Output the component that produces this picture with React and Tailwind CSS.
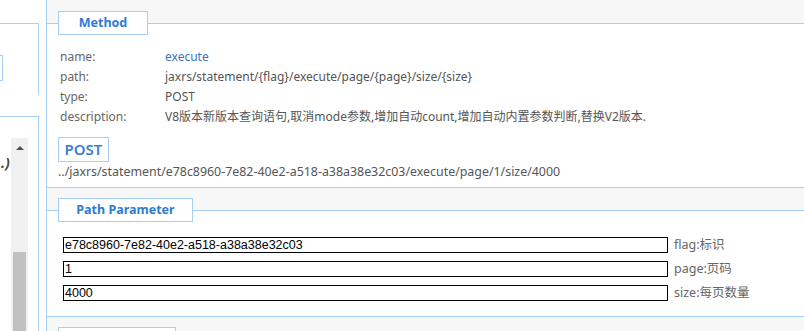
export default function App() {
  const font = { fontFamily: '"Noto Sans", "Noto Sans CJK SC", sans-serif' };
  const rows = [
    ['name:', 'execute', true],
    ['path:', 'jaxrs/statement/{flag}/execute/page/{page}/size/{size}', false],
    ['type:', 'POST', false],
    ['description:', 'V8版本新版本查询语句,取消mode参数,增加自动count,增加自动内置参数判断,替换V2版本.', false],
  ];
  const params = [
    ['e78c8960-7e82-40e2-a518-a38a38e32c03', 'flag:标识'],
    ['1', 'page:页码'],
    ['4000', 'size:每页数量'],
  ];
  return (
    <div className="w-[804px] h-[331px] overflow-hidden flex bg-white text-[12px]" style={font}>
      {/* sidebar */}
      <div className="w-[39px] shrink-0 flex flex-col overflow-hidden">
        <div className="mt-[23px] h-[72px] shrink-0 border-t border-r border-[#a6cff3] flex flex-col">
          <div className="mt-[31px] w-[3px] h-[26px] border-t border-r border-b border-[#a6cff3]" />
        </div>
        <div className="mt-[21px] flex-1 border-t border-r border-[#a6cff3] flex">
          <div className="w-[11px] shrink-0 overflow-hidden">
            <div className="mt-[36px] ml-[1px] text-[14px] font-bold italic text-[#444] leading-[20px] whitespace-nowrap">.)</div>
          </div>
          <div className="w-[17px] shrink-0 mt-[21px] bg-[#f0f0f0] flex flex-col">
            <div className="h-[20px] flex items-center justify-center">
              <div className="w-0 h-0 border-l-[4px] border-r-[4px] border-b-[4px] border-l-transparent border-r-transparent border-b-[#505050]" />
            </div>
            <div className="h-[94px]" />
            <div className="ml-[2px] w-[13px] flex-1 bg-[#c1c1c1]" />
          </div>
        </div>
      </div>
      {/* main */}
      <div className="flex-1 pl-[7px] bg-white">
        <div className="h-full border-l border-[#a6cff3] bg-[#f7f7f7] pt-[23px] flex flex-col gap-[22px]">
          {/* Method */}
          <div className="border-t border-b border-[#a6cff3] bg-white shrink-0">
            <div className="-mt-[13px] ml-[11px] w-[90px] h-[24px] border border-[#a6cff3] bg-white flex items-center justify-center text-[12.5px] font-bold text-[#2f7bd2]">
              Method
            </div>
            <div className="mt-[12px] pl-[13px] flex flex-col">
              {rows.map(([k, v, link]) => (
                <div key={k} className="flex h-[20px] items-center">
                  <div className="w-[105px] shrink-0 text-[#666]">{k}</div>
                  <div className={link ? 'text-[#3b73c4]' : 'text-[#555]'}>{v}</div>
                </div>
              ))}
            </div>
            <div className="mt-[10px] ml-[11px] w-[51px] h-[25px] border border-[#a6cff3] flex items-center justify-center text-[15px] font-semibold text-[#3a80d2]">
              POST
            </div>
            <div className="ml-[11px] h-[20px] flex items-center text-[12.4px] text-[#555]">
              ../jaxrs/statement/e78c8960-7e82-40e2-a518-a38a38e32c03/execute/page/1/size/4000
            </div>
            <div className="h-[5px]" />
          </div>
          {/* Path Parameter */}
          <div className="border-t border-b border-[#a6cff3] bg-white shrink-0">
            <div className="-mt-[13px] ml-[11px] w-[135px] h-[24px] border border-[#a6cff3] bg-white flex items-center justify-center text-[12.5px] font-bold text-[#2f7bd2]">
              Path Parameter
            </div>
            <div className="mt-[15px] pl-[16px] flex flex-col gap-[8px]">
              {params.map(([v, l]) => (
                <div key={l} className="flex items-center h-[16px]">
                  <div
                    className="w-[605px] h-[16px] border border-black px-[1px] flex items-center text-[12.5px] text-black"
                    style={{ fontFamily: '"Liberation Sans", Arial, sans-serif' }}
                  >
                    {v}
                  </div>
                  <div className="ml-[6px] text-[12.5px] text-[#666] whitespace-nowrap">{l}</div>
                </div>
              ))}
            </div>
            <div className="h-[15px]" />
          </div>
          {/* next */}
          <div className="border-t border-b border-[#a6cff3] bg-white shrink-0 h-[40px]">
            <div className="-mt-[13px] ml-[11px] w-[118px] h-[24px] border border-[#a6cff3] bg-white" />
          </div>
        </div>
      </div>
    </div>
  );
}
